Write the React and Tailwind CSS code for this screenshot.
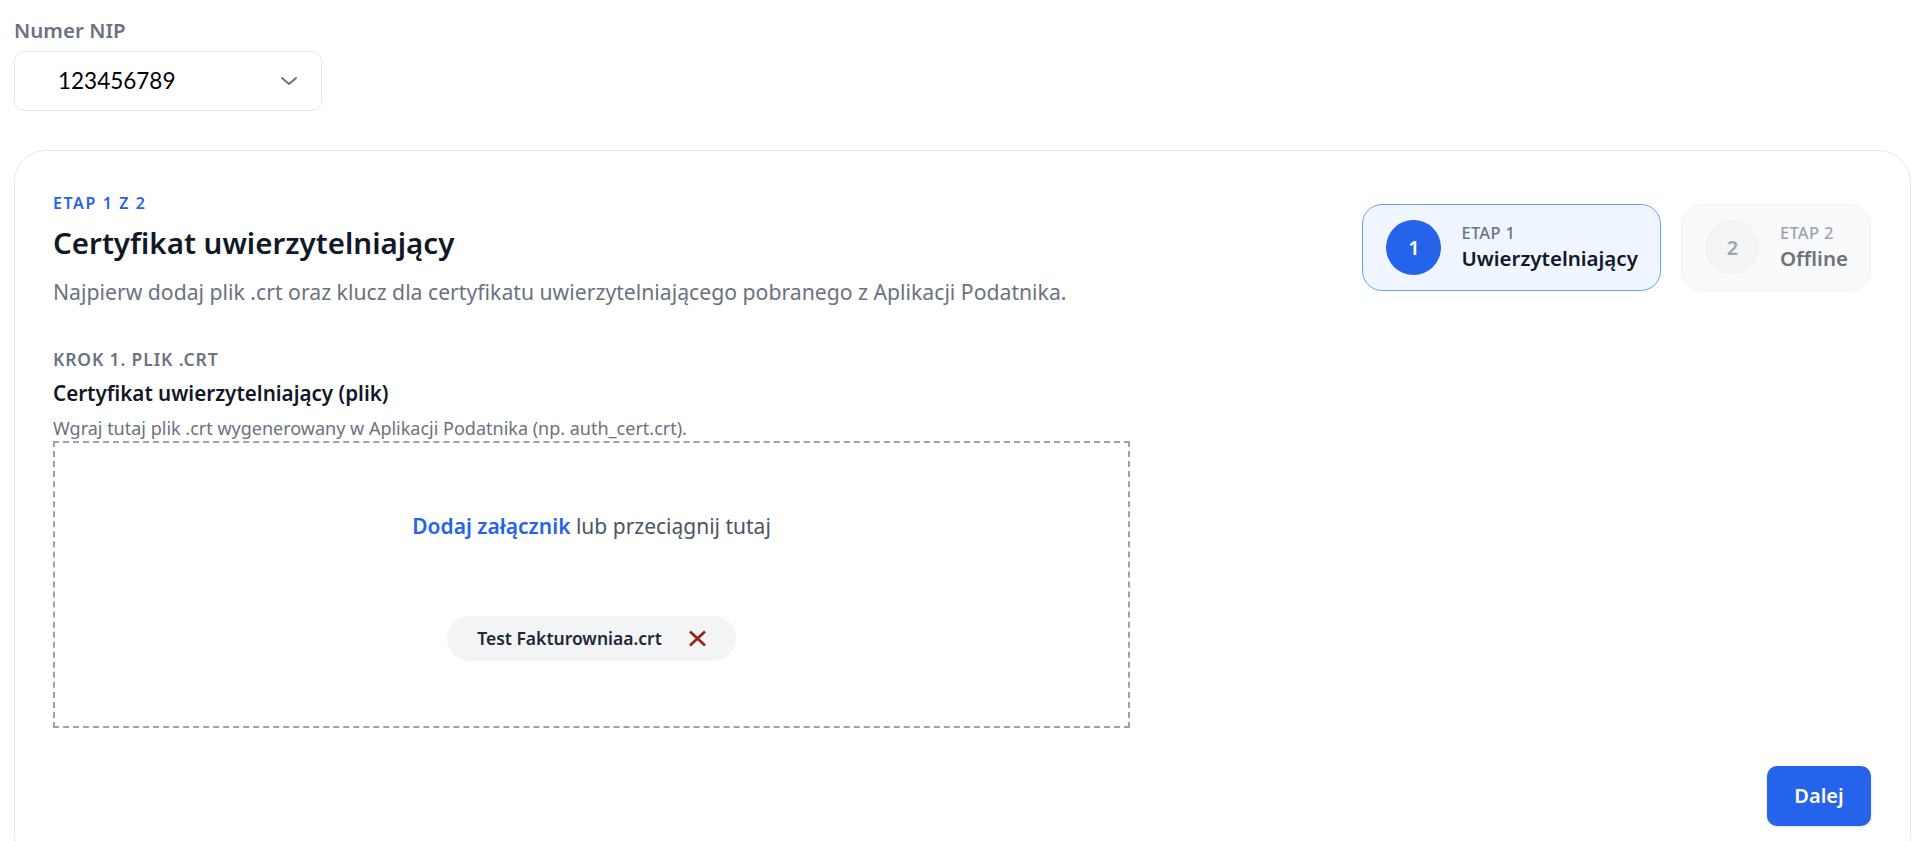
export default function App() {
  return (
    <div className="min-h-screen overflow-hidden bg-white pl-[14px] pr-[9px] pt-[15px] font-['Lato',sans-serif]">
      <div className="font-['Noto_Sans',sans-serif] text-[20.5px] leading-[30px] font-semibold text-[#6b7280]">Numer NIP</div>
      <div className="mt-[6px] flex h-[60px] w-[308px] items-center justify-between rounded-[10px] border border-[#e5e7eb] pl-[43px] pr-[23px]">
        <span className="text-[22.5px] text-black">123456789</span>
        <svg width="18" height="10" viewBox="0 0 18 10" fill="none">
          <path d="M2 2l7 6 7-6" stroke="#6b7280" strokeWidth="2" strokeLinecap="round" strokeLinejoin="round" />
        </svg>
      </div>

      <div className="mt-[39px] rounded-[32px] border border-[#e5e7eb] bg-white pl-[38px] pr-[39px] pt-[42px] pb-[40px] font-['Noto_Sans',sans-serif]">
        <div className="flex items-center justify-between">
          <div>
            <div className="text-[16px] leading-[20px] font-semibold tracking-[0.1em] text-[#2563eb]">ETAP 1 Z 2</div>
            <h2 className="mt-[10px] text-[29.5px] leading-[40px] font-semibold text-[#111827]">Certyfikat uwierzytelniający</h2>
            <p className="mt-[14px] text-[21.2px] leading-[30px] text-[#6b7280]">
              Najpierw dodaj plik .crt oraz klucz dla certyfikatu uwierzytelniającego pobranego z Aplikacji Podatnika.
            </p>
          </div>
          <div className="mb-[5px] flex gap-[20px]">
            <div className="flex items-center gap-[20px] rounded-[20px] border border-[#60a5fa] bg-[#eff6ff] pl-[23px] pr-[22px] py-[15px]">
              <div className="flex h-[55px] w-[55px] items-center justify-center rounded-full bg-[#2563eb] text-[20px] font-semibold text-white">1</div>
              <div>
                <div className="text-[16.5px] leading-[20px] font-medium tracking-[0.02em] text-[#6b7280]">ETAP 1</div>
                <div className="text-[20.5px] leading-[30px] font-semibold text-[#111827]">Uwierzytelniający</div>
              </div>
            </div>
            <div className="flex items-center gap-[20px] rounded-[20px] border border-[#f3f4f6] bg-[#f9fafb] pl-[23px] pr-[22px] py-[15px]">
              <div className="flex h-[55px] w-[55px] items-center justify-center rounded-full bg-[#f3f4f6] text-[20px] font-semibold text-[#9ca3af]">2</div>
              <div>
                <div className="text-[16.5px] leading-[20px] font-medium tracking-[0.02em] text-[#9ca3af]">ETAP 2</div>
                <div className="text-[20.5px] leading-[30px] font-semibold text-[#6b7280]">Offline</div>
              </div>
            </div>
          </div>
        </div>

        <div className="mt-[40px] text-[17.5px] leading-[25px] font-semibold tracking-[0.05em] text-[#6b7280]">KROK 1. PLIK .CRT</div>
        <div className="mt-[6px] text-[20.6px] leading-[30px] font-semibold text-[#111827]">Certyfikat uwierzytelniający (plik)</div>
        <div className="mt-[8px] text-[18px] leading-[25px] text-[#6b7280]">
          Wgraj tutaj plik .crt wygenerowany w Aplikacji Podatnika (np. auth_cert.crt).
        </div>

        <div className="flex h-[287px] w-[1077px] flex-col items-center border-2 border-dashed border-[#9ca3af] pt-[68px]">
          <div className="text-[21px] leading-[30px] text-[#4b5563]">
            <span className="font-semibold text-[#2563eb]">Dodaj załącznik</span> lub przeciągnij tutaj
          </div>
          <div className="mt-[75px] flex h-[45px] items-center gap-[26px] rounded-full bg-[#f3f4f6] pl-[30px] pr-[29px]">
            <span className="text-[17.5px] font-semibold text-[#1f2937]">Test Fakturowniaa.crt</span>
            <svg width="19" height="17" viewBox="0 0 19 17" fill="none">
              <path d="M2 1.5l15 14M17 1.5l-15 14" stroke="#991b1b" strokeWidth="2.6" strokeLinecap="butt" />
            </svg>
          </div>
        </div>

        <div className="mt-[38px] flex justify-end">
          <button className="h-[60px] w-[104px] rounded-[10px] bg-[#2563eb] text-[20px] font-semibold text-white shadow-sm">Dalej</button>
        </div>
      </div>
    </div>
  );
}
